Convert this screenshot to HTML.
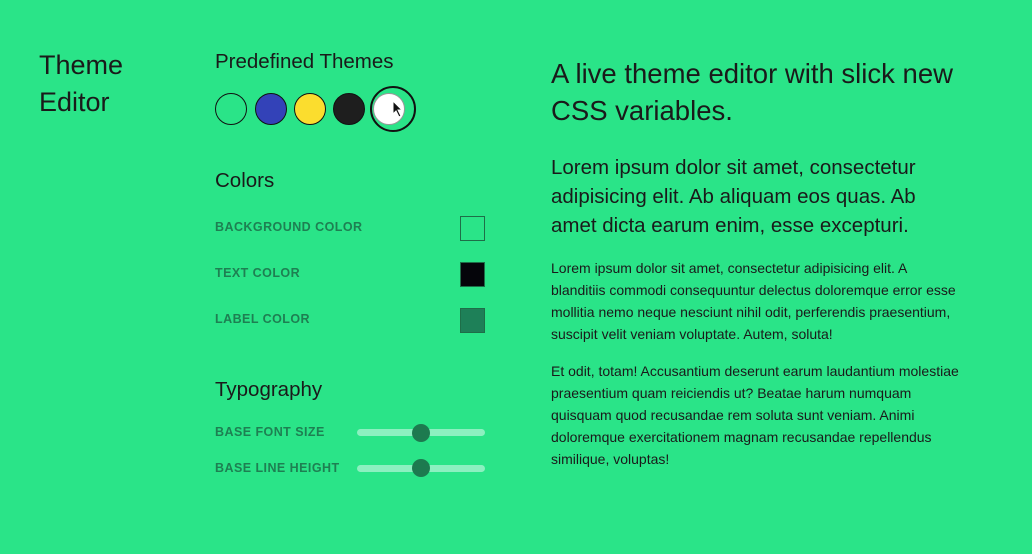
<!DOCTYPE html>
<html><head><style>
body{margin:0;width:1032px;height:554px;background:#2ae488;font-family:"Liberation Sans",sans-serif;color:#111;position:relative;overflow:hidden}
.a{position:absolute;white-space:nowrap}
.t{font-size:27px;line-height:37px;color:#1a1a1a}
.h{font-size:20.5px;color:#1a1a1a}
.l{font-size:12.5px;font-weight:bold;letter-spacing:0.45px;color:#1e7f52}
.c{position:absolute;width:30px;height:30px;border-radius:50%;border:1.5px solid #111;top:93px}
.s{position:absolute;left:460px;width:23px;height:23px;border:1px solid #1e6e48}
.tr{position:absolute;left:357px;width:128px;height:7px;border-radius:4px;background:#8cf0c0}
.th{position:absolute;left:412px;width:18px;height:18px;border-radius:50%;background:#1d7a4f}
.r{position:absolute;left:551px;color:#1a1a1a}
</style></head><body>
<div class="a t" style="left:39px;top:47px">Theme<br>Editor</div>
<div class="a h" style="left:215px;top:50px">Predefined Themes</div>
<div class="c" style="left:215px;background:#2ae488"></div>
<div class="c" style="left:255px;background:#3342b8"></div>
<div class="c" style="left:294px;background:#fbdd2e"></div>
<div class="c" style="left:333px;background:#1e1e1e"></div>
<div class="c" style="left:373px;background:#fff;border-color:#999"></div>
<div style="position:absolute;left:370px;top:86px;width:42px;height:42px;border-radius:50%;border:2px solid #111"></div>
<svg style="position:absolute;left:392px;top:100px" width="12" height="18" viewBox="0 0 12 18"><path d="M1 1 L1 14 L4 11 L7 17 L9 16 L6 10 L10 10 Z" fill="#111" stroke="#fff" stroke-width="1"/></svg>
<div class="a h" style="left:215px;top:169px">Colors</div>
<div class="a l" style="left:215px;top:220px">BACKGROUND COLOR</div>
<div class="a l" style="left:215px;top:266px">TEXT COLOR</div>
<div class="a l" style="left:215px;top:312px">LABEL COLOR</div>
<div class="s" style="top:216px;background:#2ae488"></div>
<div class="s" style="top:262px;background:#05050a"></div>
<div class="s" style="top:308px;background:#1e8058"></div>
<div class="a h" style="left:215px;top:378px">Typography</div>
<div class="a l" style="left:215px;top:425px">BASE FONT SIZE</div>
<div class="a l" style="left:215px;top:461px">BASE LINE HEIGHT</div>
<div class="tr" style="top:429px"></div><div class="th" style="top:424px"></div>
<div class="tr" style="top:465px"></div><div class="th" style="top:459px"></div>
<div class="r" style="top:55px;font-size:27.5px;line-height:37px;width:420px">A live theme editor with slick new CSS variables.</div>
<div class="r" style="top:153px;font-size:20.5px;line-height:29px;width:390px">Lorem ipsum dolor sit amet, consectetur adipisicing elit. Ab aliquam eos quas. Ab amet dicta earum enim, esse excepturi.</div>
<div class="r" style="top:257px;font-size:14px;line-height:22px;width:408px">Lorem ipsum dolor sit amet, consectetur adipisicing elit. A blanditiis commodi consequuntur delectus doloremque error esse mollitia nemo neque nesciunt nihil odit, perferendis praesentium, suscipit velit veniam voluptate. Autem, soluta!</div>
<div class="r" style="top:360px;font-size:14px;line-height:22px;width:412px">Et odit, totam! Accusantium deserunt earum laudantium molestiae praesentium quam reiciendis ut? Beatae harum numquam quisquam quod recusandae rem soluta sunt veniam. Animi doloremque exercitationem magnam recusandae repellendus similique, voluptas!</div>
</body></html>
